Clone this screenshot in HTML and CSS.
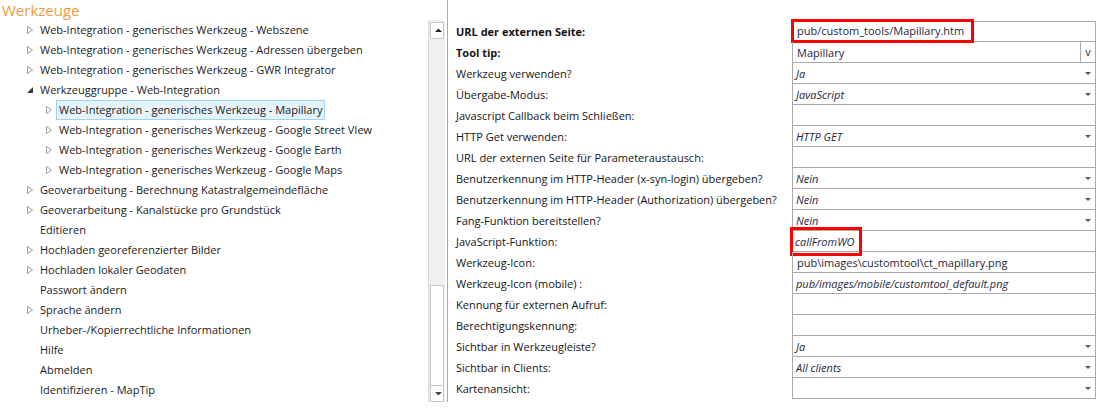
FILE: index.html
```html
<!DOCTYPE html>
<html lang="de">
<head>
<meta charset="utf-8">
<title>Werkzeuge</title>
<link rel="stylesheet" href="styles.css">
</head>
<body>
<div class="page">
  <div class="left">
    <div class="title">Werkzeuge</div>
    <div class="main">
      <ul class="tree">
        <li class="node l1"><span class="ico"><svg width="13" height="20"><path d="M3.5 6.5 L8.5 10 L3.5 13.5 Z" fill="none" stroke="#a0a0a0"/></svg></span><span class="lbl">Web-Integration - generisches Werkzeug - Webszene</span></li>
        <li class="node l1"><span class="ico"><svg width="13" height="20"><path d="M3.5 6.5 L8.5 10 L3.5 13.5 Z" fill="none" stroke="#a0a0a0"/></svg></span><span class="lbl">Web-Integration - generisches Werkzeug - Adressen übergeben</span></li>
        <li class="node l1"><span class="ico"><svg width="13" height="20"><path d="M3.5 6.5 L8.5 10 L3.5 13.5 Z" fill="none" stroke="#a0a0a0"/></svg></span><span class="lbl">Web-Integration - generisches Werkzeug - GWR Integrator</span></li>
        <li class="node l1"><span class="ico"><svg width="13" height="20"><path d="M9 7 L9 13 L3 13 Z" fill="#3c3c3c"/></svg></span><span class="lbl">Werkzeuggruppe - Web-Integration</span></li>
        <li class="node l2"><span class="ico"><svg width="13" height="20"><path d="M3.5 6.5 L8.5 10 L3.5 13.5 Z" fill="none" stroke="#a0a0a0"/></svg></span><span class="lbl sel">Web-Integration - generisches Werkzeug - Mapillary</span></li>
        <li class="node l2"><span class="ico"><svg width="13" height="20"><path d="M3.5 6.5 L8.5 10 L3.5 13.5 Z" fill="none" stroke="#a0a0a0"/></svg></span><span class="lbl">Web-Integration - generisches Werkzeug - Google Street VIew</span></li>
        <li class="node l2"><span class="ico"><svg width="13" height="20"><path d="M3.5 6.5 L8.5 10 L3.5 13.5 Z" fill="none" stroke="#a0a0a0"/></svg></span><span class="lbl">Web-Integration - generisches Werkzeug - Google Earth</span></li>
        <li class="node l2"><span class="ico"><svg width="13" height="20"><path d="M3.5 6.5 L8.5 10 L3.5 13.5 Z" fill="none" stroke="#a0a0a0"/></svg></span><span class="lbl">Web-Integration - generisches Werkzeug - Google Maps</span></li>
        <li class="node l1"><span class="ico"><svg width="13" height="20"><path d="M3.5 6.5 L8.5 10 L3.5 13.5 Z" fill="none" stroke="#a0a0a0"/></svg></span><span class="lbl">Geoverarbeitung - Berechnung Katastralgemeindefläche</span></li>
        <li class="node l1"><span class="ico"><svg width="13" height="20"><path d="M3.5 6.5 L8.5 10 L3.5 13.5 Z" fill="none" stroke="#a0a0a0"/></svg></span><span class="lbl">Geoverarbeitung - Kanalstücke pro Grundstück</span></li>
        <li class="node l1"><span class="ico"></span><span class="lbl">Editieren</span></li>
        <li class="node l1"><span class="ico"><svg width="13" height="20"><path d="M3.5 6.5 L8.5 10 L3.5 13.5 Z" fill="none" stroke="#a0a0a0"/></svg></span><span class="lbl">Hochladen georeferenzierter Bilder</span></li>
        <li class="node l1"><span class="ico"><svg width="13" height="20"><path d="M3.5 6.5 L8.5 10 L3.5 13.5 Z" fill="none" stroke="#a0a0a0"/></svg></span><span class="lbl">Hochladen lokaler Geodaten</span></li>
        <li class="node l1"><span class="ico"></span><span class="lbl">Passwort ändern</span></li>
        <li class="node l1"><span class="ico"><svg width="13" height="20"><path d="M3.5 6.5 L8.5 10 L3.5 13.5 Z" fill="none" stroke="#a0a0a0"/></svg></span><span class="lbl">Sprache ändern</span></li>
        <li class="node l1"><span class="ico"></span><span class="lbl">Urheber-/Kopierrechtliche Informationen</span></li>
        <li class="node l1"><span class="ico"></span><span class="lbl">Hilfe</span></li>
        <li class="node l1"><span class="ico"></span><span class="lbl">Abmelden</span></li>
        <li class="node l1"><span class="ico"></span><span class="lbl">Identifizieren - MapTip</span></li>
      </ul>
      <div class="scroll">
        <div class="sbtn"><svg width="15" height="15"><path d="M4 9 L7.5 5.5 L11 9 Z" fill="#222"/></svg></div>
        <div class="track"></div>
        <div class="thumb"></div>
        <div class="sbtn"><svg width="15" height="15"><path d="M4 6 L7.5 9.5 L11 6 Z" fill="#444"/></svg></div>
      </div>
    </div>
  </div>
  <div class="grid">
    <div class="row"><div class="key bold">URL der externen Seite:</div><div class="val first"><span class="mark">pub/custom_tools/Mapillary.htm</span></div></div>
    <div class="row"><div class="key bold">Tool tip:</div><div class="val"><span class="txt">Mapillary</span><span class="vbtn">v</span></div></div>
    <div class="row"><div class="key">Werkzeug verwenden?</div><div class="val drop"><span class="it">Ja</span><i class="arr"></i></div></div>
    <div class="row"><div class="key">Übergabe-Modus:</div><div class="val drop"><span class="it">JavaScript</span><i class="arr"></i></div></div>
    <div class="row"><div class="key">Javascript Callback beim Schließen:</div><div class="val"></div></div>
    <div class="row"><div class="key">HTTP Get verwenden:</div><div class="val drop"><span class="it">HTTP GET</span><i class="arr"></i></div></div>
    <div class="row"><div class="key">URL der externen Seite für Parameteraustausch:</div><div class="val"></div></div>
    <div class="row"><div class="key">Benutzerkennung im HTTP-Header (x-syn-login) übergeben?</div><div class="val drop"><span class="it">Nein</span><i class="arr"></i></div></div>
    <div class="row"><div class="key">Benutzerkennung im HTTP-Header (Authorization) übergeben?</div><div class="val drop"><span class="it">Nein</span><i class="arr"></i></div></div>
    <div class="row"><div class="key">Fang-Funktion bereitstellen?</div><div class="val drop"><span class="it">Nein</span><i class="arr"></i></div></div>
    <div class="row"><div class="key">JavaScript-Funktion:</div><div class="val"><span class="mark2">callFromWO</span></div></div>
    <div class="row"><div class="key">Werkzeug-Icon:</div><div class="val"><span class="txt">pub\images\customtool\ct_mapillary.png</span></div></div>
    <div class="row"><div class="key">Werkzeug-Icon (mobile) :</div><div class="val"><span class="it">pub/images/mobile/customtool_default.png</span></div></div>
    <div class="row"><div class="key">Kennung für externen Aufruf:</div><div class="val"></div></div>
    <div class="row"><div class="key">Berechtigungskennung:</div><div class="val"></div></div>
    <div class="row"><div class="key">Sichtbar in Werkzeugleiste?</div><div class="val drop"><span class="it">Ja</span><i class="arr"></i></div></div>
    <div class="row"><div class="key">Sichtbar in Clients:</div><div class="val drop"><span class="it">All clients</span><i class="arr"></i></div></div>
    <div class="row"><div class="key">Kartenansicht:</div><div class="val drop"><span class="it"></span><i class="arr"></i></div></div>
  </div>
</div>
</body>
</html>
```
FILE: styles.css
```css
html, body {
  margin: 0;
  padding: 0;
  background: #fff;
}
body {
  font-family: "Open Sans", "Noto Sans", sans-serif;
  font-size: 11px;
  color: #1a1a1a;
}
.page {
  display: flex;
  width: 1099px;
  height: 408px;
}
.left {
  display: flex;
  flex-direction: column;
  width: 447px;
  border-right: 1px solid #a8a8a8;
  height: 402px;
}
.title {
  height: 20px;
  line-height: 21px;
  padding-left: 2px;
  font-size: 15px;
  color: #f39a3a;
}
.main {
  display: flex;
  flex: 1;
}
.tree {
  list-style: none;
  margin: 0;
  padding: 0;
  width: 428px;
}
.node {
  display: flex;
  align-items: center;
  height: 20px;
  white-space: nowrap;
}
.node.l1 { padding-left: 24px; }
.node.l2 { padding-left: 43px; }
.ico {
  width: 13px;
  height: 20px;
  flex: none;
}
.ico svg { display: block; }
.lbl {
  height: 18px;
  line-height: 18px;
  padding: 0 2px;
  border: 1px solid transparent;
}
.lbl.sel {
  background: #e5f3fb;
  border-color: #9fd3f3;
}
.scroll {
  width: 17px;
  border-left: 1px solid #d8d8d8;
  display: flex;
  flex-direction: column;
  padding: 2px 1px 0 1px;
  box-sizing: border-box;
  background: #f0f0f0;
}
.sbtn {
  height: 15px;
  border: 1px solid #c8c8c8;
  background: #fff;
  flex: none;
}
.sbtn svg { display: block; }
.track {
  flex: 0 0 246px;
}
.thumb {
  height: 100px;
  flex: none;
  background: #fff;
  border: 1px solid #c8c8c8;
  border-bottom: none;
  box-sizing: border-box;
}
.grid {
  margin-top: 21px;
  display: flex;
  flex-direction: column;
}
.row {
  display: flex;
  height: 21px;
}
.key {
  width: 344px;
  padding-left: 8px;
  box-sizing: border-box;
  line-height: 21px;
  white-space: nowrap;
  color: #141414;
}
.key.bold { font-weight: bold; }
.val {
  width: 304px;
  box-sizing: border-box;
  border: 1px solid #a9a9a9;
  border-top: none;
  display: flex;
  align-items: center;
  position: relative;
  color: #1e1e3c;
  white-space: nowrap;
}
.val.first { border-top: 1px solid #a9a9a9; }
.txt { padding-left: 4px; }
.it {
  font-style: italic;
  padding-left: 3px;
  flex: 1;
}
.drop { justify-content: space-between; }
.arr {
  width: 0;
  height: 0;
  border-left: 3px solid transparent;
  border-right: 3px solid transparent;
  border-top: 3px solid #555;
  margin-right: 4px;
}
.vbtn {
  margin-left: auto;
  width: 14px;
  height: 100%;
  border-left: 1px solid #a9a9a9;
  text-align: center;
  line-height: 19px;
}
.mark {
  position: absolute;
  left: -2px;
  top: -3px;
  width: 183px;
  height: 24px;
  box-sizing: border-box;
  border: 3px solid #f00;
  padding-left: 3px;
  line-height: 18px;
}
.mark2 {
  position: absolute;
  left: -3px;
  top: -4px;
  width: 72px;
  height: 29px;
  box-sizing: border-box;
  border: 3px solid #f00;
  padding-left: 2px;
  line-height: 23px;
  font-style: italic;
}
```
